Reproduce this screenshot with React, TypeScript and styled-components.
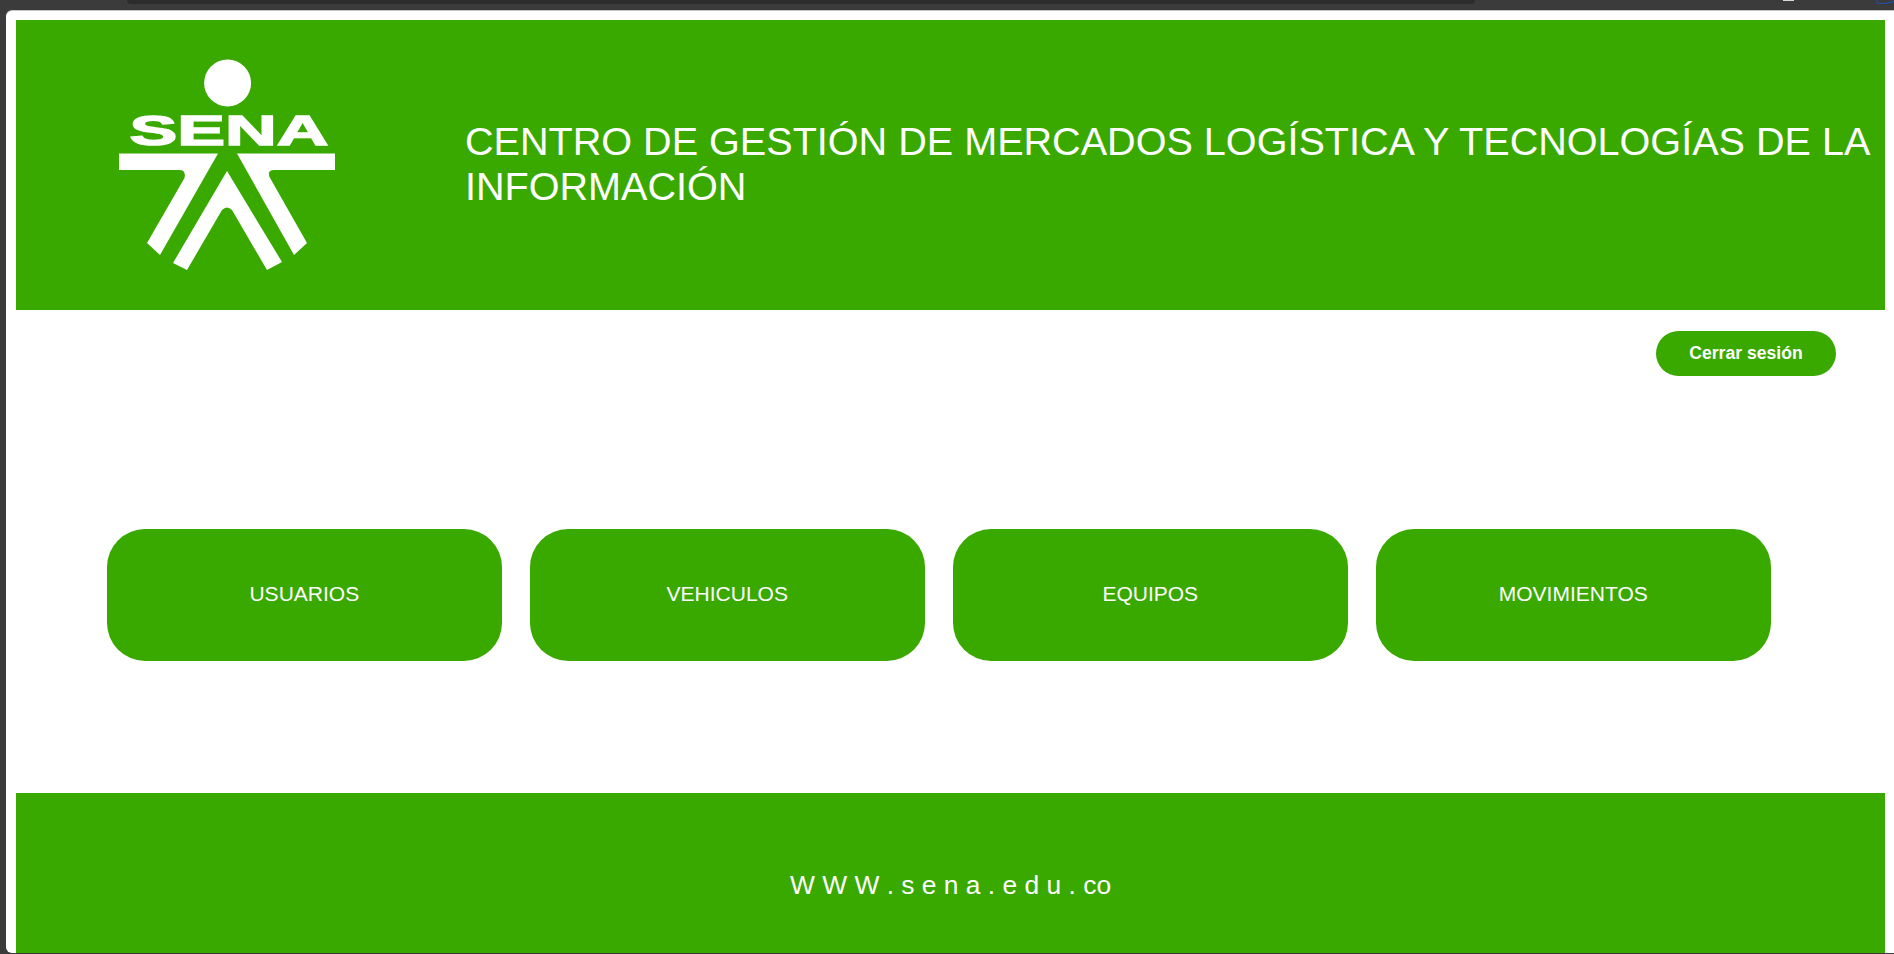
import styled, { createGlobalStyle } from "styled-components";

const GREEN = "#39a900";

const GlobalStyle = createGlobalStyle`
  html, body {
    margin: 0;
    padding: 0;
    background: #3b3b3b;
  }
  * {
    box-sizing: border-box;
  }
`;

const Frame = styled.div`
  position: relative;
  height: 954px;
  padding: 11px 0 1px 6px;
  overflow: hidden;
  font-family: "Liberation Sans", Arial, sans-serif;
`;

// bits of the browser window peeking in above the page
const TabEdge = styled.div`
  position: absolute;
  top: 0;
  left: 127px;
  width: 1348px;
  height: 4px;
  background: #2c2c2c;
  border-radius: 0 0 10px 10px;
`;

const ChromeDot = styled.div`
  position: absolute;
  top: 0;
  left: 1783px;
  width: 11px;
  height: 1px;
  background: #d8d8d8;
`;

const ChromeIcon = styled.svg`
  position: absolute;
  top: 0;
  left: 1876px;
`;

const Page = styled.main`
  height: 942px;
  padding: 9px 9px 0 10px;
  background: #fff;
  box-shadow: 0 -1px 0 #c4c4c4;
  border-radius: 6px 0 0 6px;
  display: flex;
  flex-direction: column;
`;

const Header = styled.header`
  height: 290px;
  flex: none;
  background: ${GREEN};
  color: #fff;
  display: flex;
  align-items: center;
`;

const LogoSlot = styled.div`
  width: 449px;
  flex: none;
  align-self: flex-start;
`;

const Title = styled.h1`
  margin: 0 0 2px;
  font-size: 39.6px;
  font-weight: 400;
  line-height: 45px;
`;

const Actions = styled.div`
  display: flex;
  justify-content: flex-end;
  padding: 21px 49px 0 0;
`;

const LogoutButton = styled.button`
  width: 180px;
  height: 45px;
  border: none;
  border-radius: 23px;
  background: ${GREEN};
  color: #fff;
  font: bold 17.6px "Liberation Sans", Arial, sans-serif;
`;

const Menu = styled.nav`
  display: grid;
  grid-template-columns: repeat(4, 394.6px);
  column-gap: 28.4px;
  padding: 153px 0 0 91px;
`;

const MenuCard = styled.a`
  height: 132px;
  padding-bottom: 2px;
  border-radius: 38px;
  background: ${GREEN};
  color: #fff;
  font-size: 21px;
  display: flex;
  align-items: center;
  justify-content: center;
`;

const Footer = styled.footer`
  margin-top: auto;
  height: 160px;
  padding-top: 24px;
  flex: none;
  background: ${GREEN};
  color: #fff;
  font-size: 26.4px;
  display: flex;
  align-items: center;
  justify-content: center;
`;

const menuItems = ["USUARIOS", "VEHICULOS", "EQUIPOS", "MOVIMIENTOS"];

function SenaLogo() {
  return (
    <svg width="449" height="290" viewBox="16 20 449 290" fill="#fff" aria-label="SENA">
      <circle cx="227.6" cy="83" r="23.5" />
      <text
        x="129.5"
        y="144.5"
        fontFamily="'Liberation Sans', Arial, sans-serif"
        fontWeight="700"
        fontSize="42"
        stroke="#fff"
        strokeWidth="1.4"
        textLength="199"
        lengthAdjust="spacingAndGlyphs"
      >
        SENA
      </text>
      <path d="M119 153.5H218L160 255L147 243L184.5 178Q186 170 180 170H119Z" />
      <path d="M237 153.5H335V170H274Q267 170 269.5 177L307 243L294 255Z" />
      <path d="M227 171L282 262L267 270L232 210Q227 205 222 210L187 270L173 263Z" />
    </svg>
  );
}

export default function App() {
  return (
    <>
      <GlobalStyle />
      <Frame>
        <TabEdge />
        <ChromeDot />
        <ChromeIcon width="18" height="5" viewBox="0 0 18 5" fill="none">
          <path d="M1 0V2Q1 3.5 3 3.5H8Q12 3.5 18 1" stroke="#1f4fb0" strokeWidth="1.2" />
        </ChromeIcon>
        <Page>
          <Header>
            <LogoSlot>
              <SenaLogo />
            </LogoSlot>
            <Title>CENTRO DE GESTIÓN DE MERCADOS LOGÍSTICA Y TECNOLOGÍAS DE LA INFORMACIÓN</Title>
          </Header>
          <Actions>
            <LogoutButton>Cerrar sesión</LogoutButton>
          </Actions>
          <Menu>
            {menuItems.map((item) => (
              <MenuCard key={item}>{item}</MenuCard>
            ))}
          </Menu>
          <Footer>W W W . s e n a . e d u . co</Footer>
        </Page>
      </Frame>
    </>
  );
}
